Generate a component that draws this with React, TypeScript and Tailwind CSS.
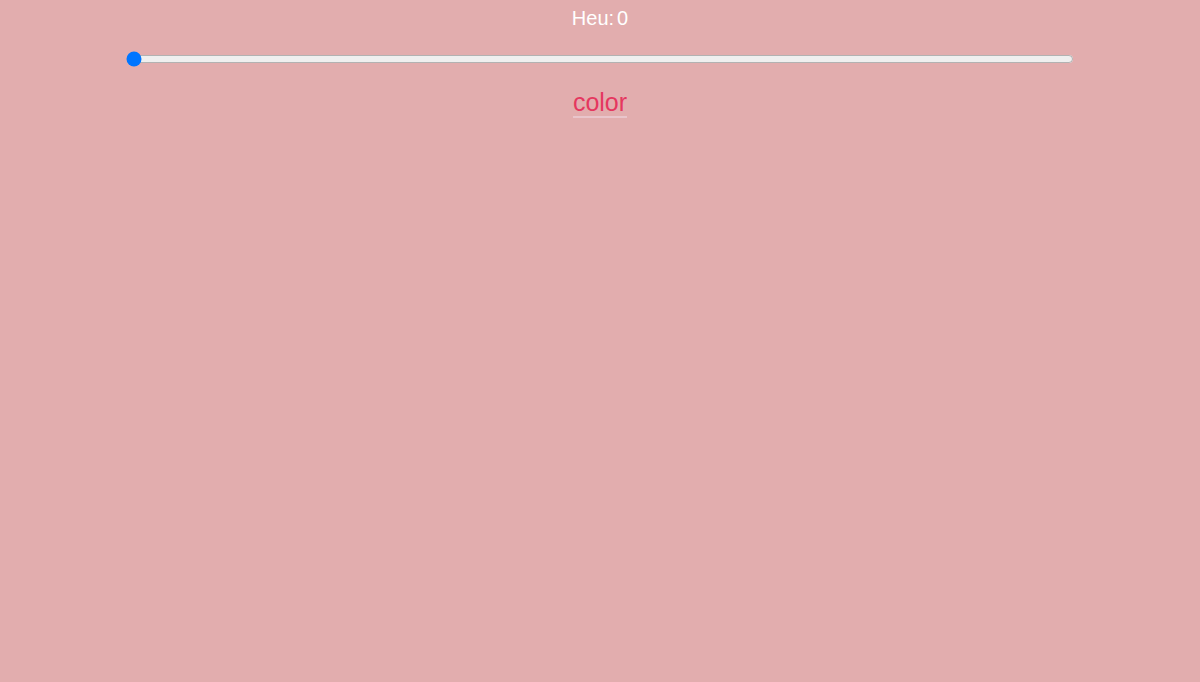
import React, { useState } from "react";

export default function App() {
  const [hue, setHue] = useState(0);
  return (
    <div
      className="min-h-[682px] w-full bg-[#e2adae] text-center"
      style={{ fontFamily: '"Liberation Sans", Arial, sans-serif' }}
    >
      <div className="pt-[6px] text-[20px] leading-[24px] text-white">
        Heu:<span className="ml-[3px]">{hue}</span>
      </div>
      <div className="mt-[21px] flex justify-center">
        <input
          type="range"
          min={0}
          max={360}
          value={hue}
          onChange={(e) => setHue(Number(e.target.value))}
          className="m-0 w-[948px] accent-[#0075ff]"
        />
      </div>
      <div className="mt-[21px] flex justify-center">
        <span className="border-b-2 border-[#e9c5cb] text-[25px] leading-[28px] text-[#e5375f]">
          color
        </span>
      </div>
    </div>
  );
}
